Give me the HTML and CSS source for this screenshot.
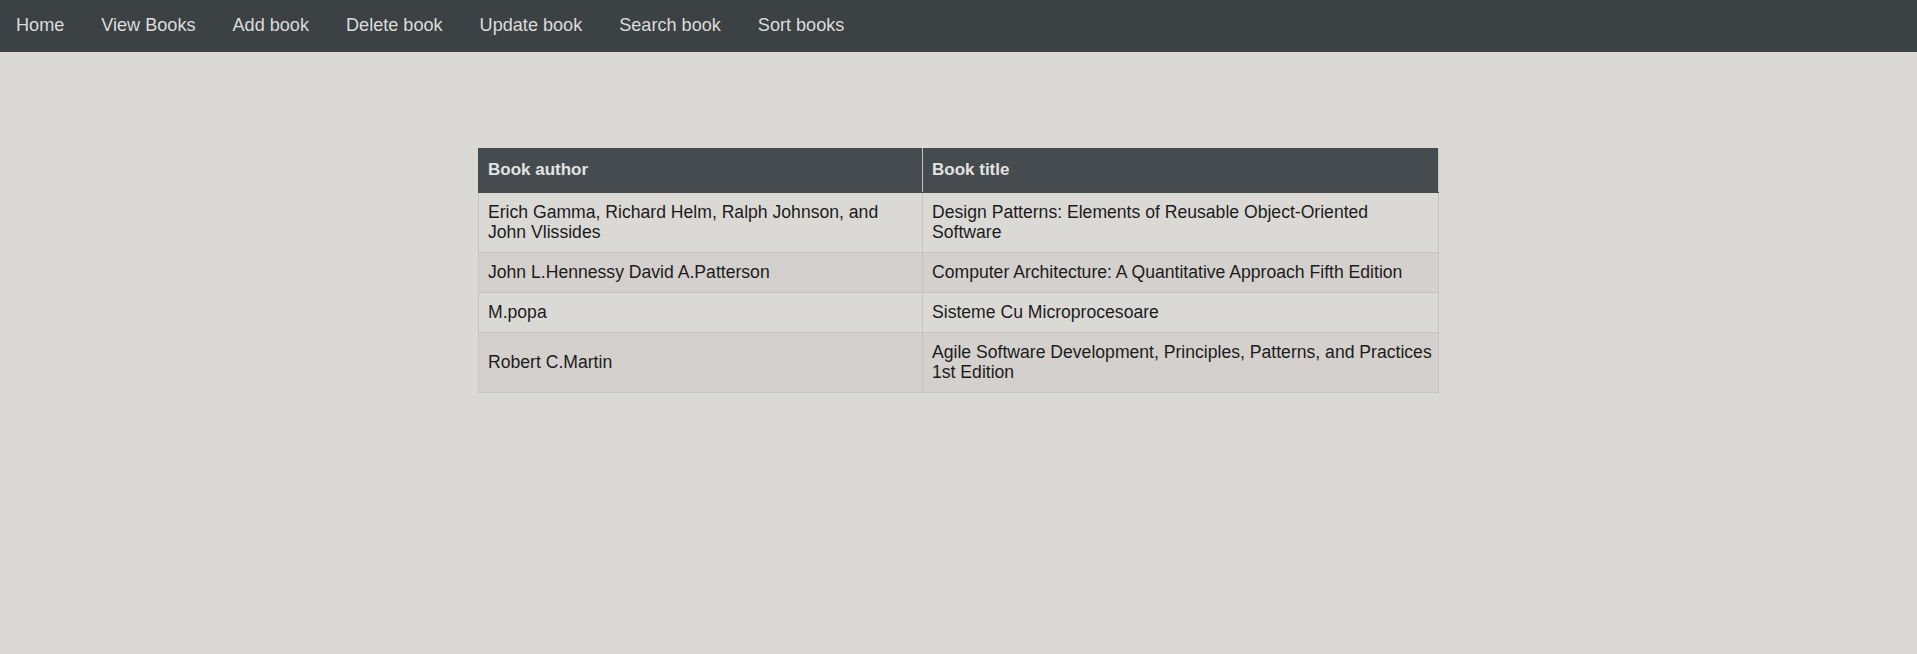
FILE: index.html
```html
<!DOCTYPE html>
<html>
<head>
<meta charset="utf-8">
<link rel="stylesheet" href="styles.css">
</head>
<body>
<div class="topnav">
  <a href="#">Home</a>
  <a href="#">View Books</a>
  <a href="#">Add book</a>
  <a href="#">Delete book</a>
  <a href="#">Update book</a>
  <a href="#">Search book</a>
  <a href="#">Sort books</a>
</div>
<div class="content">
  <table class="books">
    <colgroup><col class="c1"><col class="c2"></colgroup>
    <tr><th>Book author</th><th>Book title</th></tr>
    <tr><td>Erich Gamma, Richard Helm, Ralph Johnson, and John Vlissides</td><td>Design Patterns: Elements of Reusable Object-Oriented Software</td></tr>
    <tr><td>John L.Hennessy David A.Patterson</td><td>Computer Architecture: A Quantitative Approach Fifth Edition</td></tr>
    <tr><td>M.popa</td><td>Sisteme Cu Microprocesoare</td></tr>
    <tr><td>Robert C.Martin</td><td>Agile Software Development, Principles, Patterns, and Practices 1st Edition</td></tr>
  </table>
</div>
</body>
</html>
```
FILE: styles.css
```css
html, body {
  margin: 0;
  padding: 0;
  background: #dbd9d5;
  font-family: "Liberation Sans", Arial, sans-serif;
  font-size: 18px;
  color: #1c1c1c;
}
.topnav {
  background: #3c4144;
  height: 52px;
  white-space: nowrap;
  line-height: 21px;
}
.topnav a {
  display: inline-block;
  padding: 15px 16px;
  color: #dcdcdc;
  text-decoration: none;
  font-size: 18.1px;
}
.content {
  padding-top: 96px;
}
.books {
  width: 960px;
  margin: 0 auto;
  border-collapse: collapse;
  table-layout: fixed;
}
.c1 { width: 444px; }
.c2 { width: 516px; }
.books th, .books td {
  border: 1px solid #c6c3c0;
  text-align: left;
  padding: 9px 3px 9px 9px;
  line-height: 20.7px;
  font-size: 17.6px;
}
.books th {
  background: #464b4f;
  color: #e2e2e2;
  font-weight: bold;
  font-size: 17px;
  padding-top: 11px;
  padding-bottom: 11px;
  border-color: #464b4f;
  border-right-color: #c6c3c0;
}
.books tr:nth-child(odd) td { background: #d4d0cd; }
.books tr:nth-child(even) td { background: #dbd9d5; }
```
